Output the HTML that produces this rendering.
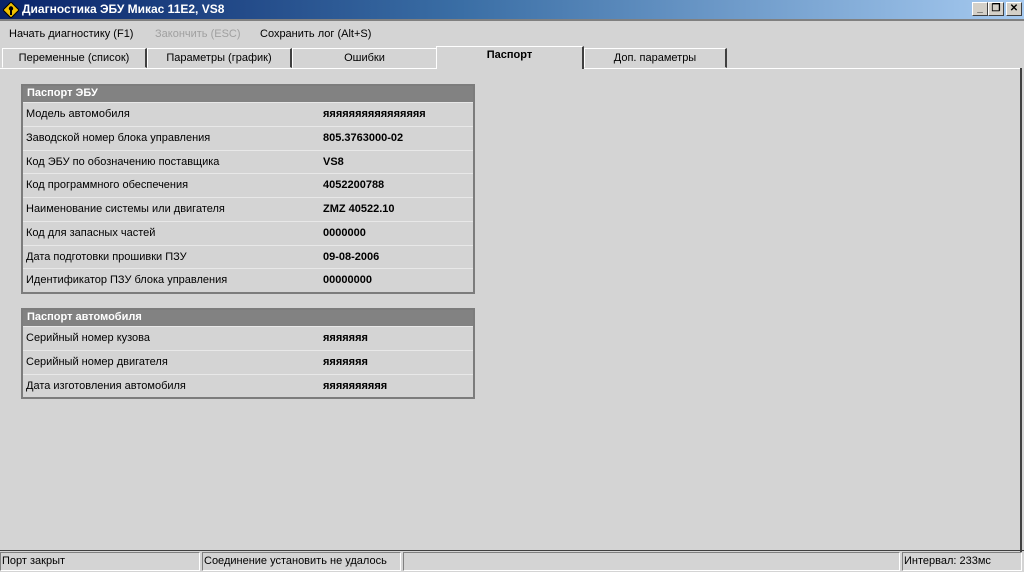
<!DOCTYPE html>
<html><head><meta charset="utf-8">
<style>
*{margin:0;padding:0;box-sizing:border-box}
body{width:1024px;height:574px;overflow:hidden;background:#d4d4d4;font-family:"Liberation Sans",sans-serif;font-size:11px;color:#000;position:relative}
.a{position:absolute}
#title{left:0;top:0;width:1024px;height:19px;background:linear-gradient(90deg,#0a246a 0%,#3a6ea5 45%,#a6caf0 100%);color:#fff;font-weight:bold;font-size:12px;line-height:19px;padding-left:22px}
.btn{top:2px;width:16px;height:14px;background:#d4d0c8;border:1px solid;border-color:#fff #404040 #404040 #fff;font-size:10px;line-height:12px;text-align:center;font-weight:bold;color:#000}
.menu{top:28px;font-size:11px}
.tab{top:48px;height:20px;border:1px solid;border-color:#fff #404040 transparent #fff;border-right-width:2px;text-align:center;line-height:18px;background:#d4d4d4}
.tbl{left:21px;width:454px;border:2px solid #7c7c7c;background:#d4d4d4}
.hd{height:16px;background:#828282;color:#fff;font-weight:bold;line-height:15px;padding-left:4px}
.row{height:23.75px;border-top:1px solid #e8e8e8;line-height:22px;position:relative;padding-left:3px}
.row b{position:absolute;left:300px;top:0}
.sb{top:552px;height:19px;border:1px solid;border-color:#808080 #fff #fff #808080;line-height:17px;padding-left:1px}
</style></head><body>
<div id="title" class="a">Диагностика ЭБУ Микас 11Е2, VS8</div>
<svg class="a" style="left:3px;top:2px" width="16" height="16" viewBox="0 0 16 16"><path d="M8 0L16 8 8 16 0 8Z" fill="#f0c000" stroke="#000"/><circle cx="8" cy="6.5" r="2.2" fill="#000"/><rect x="7" y="8" width="2" height="5" fill="#000"/></svg>
<div class="a btn" style="left:972px">_</div>
<div class="a btn" style="left:988px">❐</div>
<div class="a btn" style="left:1006px">✕</div>
<div class="a" style="left:0;top:19px;width:1024px;height:2px;background:#808080"></div>
<div class="a menu" style="left:9px">Начать диагностику (F1)</div>
<div class="a menu" style="left:155px;color:#a0a0a0">Закончить (ESC)</div>
<div class="a menu" style="left:260px">Сохранить лог (Alt+S)</div>
<div class="a" style="left:0;top:68px;width:1022px;height:1px;background:#fff"></div>
<div class="a" style="left:1020px;top:68px;width:2px;height:484px;background:#404040"></div>
<div class="a tab" style="left:2px;width:145px">Переменные (список)</div>
<div class="a tab" style="left:147px;width:145px">Параметры (график)</div>
<div class="a tab" style="left:292px;width:144px;border-right:none">Ошибки</div>
<div class="a tab" style="left:436px;top:46px;width:148px;height:23px;font-weight:bold;line-height:16px;border-bottom:none">Паспорт</div>
<div class="a tab" style="left:584px;width:143px">Доп. параметры</div>

<div class="a tbl" style="top:84px">
<div class="hd">Паспорт ЭБУ</div>
<div class="row">Модель автомобиля<b>яяяяяяяяяяяяяяяя</b></div>
<div class="row">Заводской номер блока управления<b>805.3763000-02</b></div>
<div class="row">Код ЭБУ по обозначению поставщика<b>VS8</b></div>
<div class="row">Код программного обеспечения<b>4052200788</b></div>
<div class="row">Наименование системы или двигателя<b>ZMZ 40522.10</b></div>
<div class="row">Код для запасных частей<b>0000000</b></div>
<div class="row">Дата подготовки прошивки ПЗУ<b>09-08-2006</b></div>
<div class="row">Идентификатор ПЗУ блока управления<b>00000000</b></div>
</div>

<div class="a tbl" style="top:308px">
<div class="hd">Паспорт автомобиля</div>
<div class="row">Серийный номер кузова<b>яяяяяяя</b></div>
<div class="row">Серийный номер двигателя<b>яяяяяяя</b></div>
<div class="row">Дата изготовления автомобиля<b>яяяяяяяяяя</b></div>
</div>

<div class="a" style="left:0;top:550px;width:1024px;height:1px;background:#404040"></div>
<div class="a sb" style="left:0;width:200px">Порт закрыт</div>
<div class="a sb" style="left:202px;width:199px">Соединение установить не удалось</div>
<div class="a sb" style="left:403px;width:497px"></div>
<div class="a sb" style="left:902px;width:120px">Интервал: 233мс</div>
<div class="a" style="left:0;top:572px;width:1024px;height:2px;background:#fff"></div>
</body></html>
